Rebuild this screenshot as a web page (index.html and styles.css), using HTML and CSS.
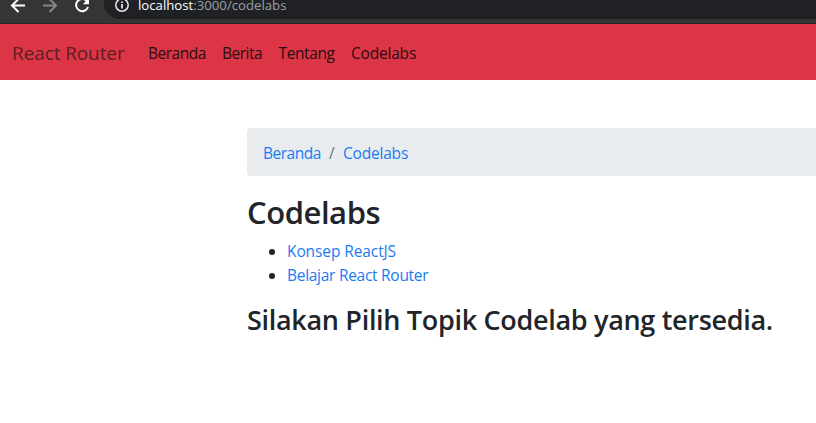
FILE: index.html
```html
<!DOCTYPE html>
<html lang="id">
<head>
<meta charset="utf-8">
<title>React Router</title>
<link rel="stylesheet" href="styles.css">
</head>
<body>
<div class="toolbar">
  <svg class="controls" width="104" height="23" viewBox="0 0 104 23" fill="none">
    <path d="M25 5.5H12.5M18.5 -1L12 5.5L18.5 12" stroke="#fff" stroke-width="2"/>
    <path d="M43 5.5H55.5M49.5 -1L56 5.5L49.5 12" stroke="#858687" stroke-width="2"/>
    <path d="M86.6 0.8A6.1 6.1 0 1 0 88 7" stroke="#fff" stroke-width="2"/>
    <path d="M89 -2V4.2H82.8Z" fill="#fff"/>
  </svg>
  <div class="address">
    <svg width="16" height="16" viewBox="0 0 16 16" fill="none">
      <circle cx="8" cy="8" r="6.2" stroke="#e8eaed" stroke-width="1.5"/>
      <path d="M8 7V11.5M8 4.4V6" stroke="#e8eaed" stroke-width="1.7"/>
    </svg>
    <span class="url"><span class="host">localhost</span>:3000/codelabs</span>
  </div>
</div>
<nav class="navbar">
  <a class="brand">React Router</a>
  <a class="nav-link beranda">Beranda</a>
  <a class="nav-link berita">Berita</a>
  <a class="nav-link tentang">Tentang</a>
  <a class="nav-link codelabs">Codelabs</a>
</nav>
<main class="container">
  <div class="breadcrumb"><a class="beranda">Beranda</a><span class="slash">/</span><a class="codelabs">Codelabs</a></div>
  <h2>Codelabs</h2>
  <ul>
    <li><a class="konsep">Konsep ReactJS</a></li>
    <li><a class="belajar">Belajar React Router</a></li>
  </ul>
  <h3>Silakan Pilih Topik Codelab yang tersedia.</h3>
</main>
</body>
</html>
```
FILE: styles.css
```css
* { box-sizing: border-box; }
body {
  margin: 0;
  height: 423px;
  overflow: hidden;
  background: #fff;
  color: #212529;
  font: 400 15.5px/24px "Open Sans", "Noto Sans", sans-serif;
}
.toolbar {
  display: flex;
  height: 24px;
  background: #353535;
  border-bottom: 1px solid #292526;
}
.controls { flex: none; }
.address {
  display: flex;
  flex: 1;
  height: 19px;
  padding: 0 0 0 10px;
  border-radius: 0 0 0 16px;
  background: #202124;
}
.address svg { flex: none; margin-top: -3px; }
.url {
  margin: -3px 0 0 8px;
  color: #9aa0a6;
  font-size: 13.2px;
  line-height: 17px;
  white-space: nowrap;
}
.host { color: #fff; }
.navbar {
  display: flex;
  align-items: center;
  height: 56px;
  padding-left: 12px;
  background: #dc3545;
  white-space: nowrap;
}
.brand {
  width: 128px;
  padding-top: 1px;
  font-size: 19px;
  letter-spacing: -0.1px;
}
.nav-link { margin: 0 8px; padding-top: 2px; }
.beranda { width: 58px; letter-spacing: -0.5px; }
.berita { width: 40.5px; letter-spacing: -0.5px; }
.tentang { width: 56.5px; letter-spacing: -0.4px; }
.codelabs { width: 66px; letter-spacing: -0.2px; }
.konsep { letter-spacing: -0.1px; }
.belajar { letter-spacing: -0.28px; }
.container { padding: 48px 0 0 247px; }
.breadcrumb {
  display: flex;
  height: 48px;
  padding: 13px 16px 11px;
  margin-bottom: 16px;
  border-radius: 4px 0 0 4px;
  background: #e9ecef;
}
a { color: #1a7bf2; }
.navbar a { color: #2a0d13; }
.navbar .brand { color: #5c1d26; }
.slash { width: 6px; margin: 0 8px; color: #6c757d; }
h2, h3 { margin: 0; font-weight: 550; white-space: nowrap; }
h2 {
  height: 47px;
  padding-top: 1px;
  font-size: 31px;
  line-height: 39px;
  letter-spacing: -0.45px;
}
ul { margin: 0 0 16px; padding-left: 40px; }
h3 { font-size: 27px; line-height: 34px; letter-spacing: -0.31px; }
```
